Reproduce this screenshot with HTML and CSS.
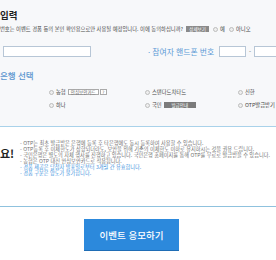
FILE: index.html
```html
<!DOCTYPE html>
<html lang="ko">
<head>
  <meta charset="UTF-8" />
  <meta name="viewport" content="width=device-width, initial-scale=1.0" />
  <title>이벤트 응모</title>
  <link rel="stylesheet" href="styles.css">
</head>
<body>
  <div class="page">
    <section class="entry">
      <h2 class="entry-title">입력</h2>

      <div class="agree-row">
        <span>번호는 이벤트 경품 등의 본인 확인용으로만 사용될 예정입니다. 이에 동의하십니까?</span>
        <span class="tag tag-gray">상세보기</span>
        <label class="radio"><span class="dot"></span>예</label>
        <label class="radio"><span class="dot"></span>아니오</label>
      </div>

      <div class="phone-row">
        <input type="text" class="field field-name" />
        <span class="field-label">· 참여자 핸드폰 번호</span>
        <input type="text" class="field field-short" />
        <span class="dash">-</span>
        <input type="text" class="field field-mid" />
      </div>

      <h3 class="bank-title">은행 선택</h3>

      <div class="bank-grid">
        <label class="radio"><span class="dot"></span>농협<span class="tag tag-line">안심보안카드</span><span class="tag tag-line tag-q">?</span></label>
        <label class="radio"><span class="dot"></span>스탠다드차타드</label>
        <label class="radio"><span class="dot"></span>신한</label>
        <label class="radio"><span class="dot"></span>하나</label>
        <label class="radio"><span class="dot"></span>국민<span class="tag tag-dark">발급안내</span></label>
        <label class="radio"><span class="dot"></span>OTP발급받기</label>
      </div>
    </section>

    <section class="notice">
      <div class="notice-title">요!</div>
      <ul class="notice-list">
        <li>- OTP는 최초 발급받은 은행에 등록 후 타은행에도 동시 등록하여 사용할 수 있습니다.</li>
        <li>- OTP등록 후 이체한도가 상향되더라도, 보안을 위해 기존의 이체한도 이하로 유지하시는 것을 권유 드립니다.</li>
        <li>- 국민은행은 별도의 자체 행사를 진행하고 있습니다. 국민은행 홈페이지를 통해 OTP를 무료로 발급받을 수 있습니다.</li>
        <li>- 농협은 OTP 대신 안심보안카드로 적용됩니다.</li>
        <li class="em">- 경품 제공은 당첨자 발표일로부터 3개월 간 유효합니다.</li>
        <li class="em">- 경품 구분은 양도가 불가합니다.</li>
      </ul>
    </section>

    <div class="submit">
      <button type="button" class="submit-btn">이벤트 응모하기</button>
    </div>
  </div>
</body>
</html>
```

FILE: styles.css
```css
* {
  margin: 0;
  padding: 0;
  box-sizing: border-box;
}

body {
  font-family: 'Noto Sans CJK KR', 'Noto Sans', sans-serif;
  background: #fff;
  overflow: hidden;
}

.page {
  width: 360px;
}

.entry {
  height: 127px;
  background: #f7f8fa;
  border-bottom: 1px solid #a9d2ea;
  padding-top: 9px;
}

.entry-title {
  font-size: 9.5px;
  font-weight: 700;
  color: #222;
  line-height: 12px;
}

.agree-row {
  display: flex;
  align-items: center;
  margin-top: 3px;
  height: 10px;
  font-size: 5.3px;
  color: #4a4a4a;
  white-space: nowrap;
}

.tag {
  display: inline-flex;
  align-items: center;
  justify-content: center;
  height: 6px;
  padding: 0 2px;
  font-size: 4.5px;
  line-height: 1;
}

.tag-gray {
  background: #8a8a8a;
  color: #fff;
  margin-left: 3px;
  width: 23px;
}

.tag-dark {
  background: #7b7b7b;
  color: #fff;
  margin-left: 2px;
  width: 32px;
  height: 6px;
}

.tag-line {
  border: 1px solid #aaa;
  background: #fff;
  color: #666;
  margin-left: 2px;
  width: 31px;
  height: 6px;
}

.tag-q {
  width: 7px;
  margin-left: 1px;
}

.radio {
  display: inline-flex;
  align-items: center;
  font-size: 5.3px;
  color: #444;
  white-space: nowrap;
}

.agree-row .radio {
  margin-left: 4px;
}

.dot {
  width: 5px;
  height: 5px;
  border: 1px solid #bdbdbd;
  border-radius: 50%;
  background: #eee;
  margin-right: 2px;
}

.phone-row {
  display: flex;
  align-items: center;
  margin-top: 12px;
  height: 11px;
}

.field {
  height: 11px;
  border: 1px solid #b7c6d6;
  background: #fff;
}

.field-name {
  width: 88px;
  margin-left: 3px;
}

.field-label {
  margin-left: 57px;
  width: 71px;
  font-size: 7.8px;
  color: #5b9ad6;
  white-space: nowrap;
}

.field-short {
  width: 27px;
}

.field-mid {
  width: 40px;
}

.dash {
  font-size: 6px;
  color: #666;
  width: 8px;
  text-align: center;
}

.bank-title {
  margin-top: 13px;
  font-size: 8.5px;
  font-weight: 500;
  color: #5b95cf;
  line-height: 10px;
}

.bank-grid {
  display: grid;
  grid-template-columns: 96px 93px auto;
  row-gap: 7px;
  margin-top: 9px;
  padding-left: 49px;
}

.bank-grid .radio {
  height: 6px;
}

.notice {
  display: flex;
  height: 80px;
  border-bottom: 1px solid #8fc2de;
  padding-top: 13px;
}

.notice-title {
  width: 20px;
  margin-top: 6px;
  font-size: 11px;
  font-weight: 700;
  color: #222;
  line-height: 14px;
}

.notice-list {
  list-style: none;
  font-size: 5.2px;
  line-height: 6.1px;
  color: #6f6f6f;
  white-space: nowrap;
}

.notice-list .em {
  color: #3d92dc;
}

.submit {
  padding-top: 12px;
  padding-left: 84px;
}

.submit-btn {
  width: 95px;
  height: 32px;
  border: none;
  border-bottom: 1px solid #1f6db5;
  background: #2c89dc;
  color: #fff;
  font-family: 'Noto Sans CJK KR', sans-serif;
  font-size: 9.5px;
  font-weight: 500;
  cursor: pointer;
}
```
